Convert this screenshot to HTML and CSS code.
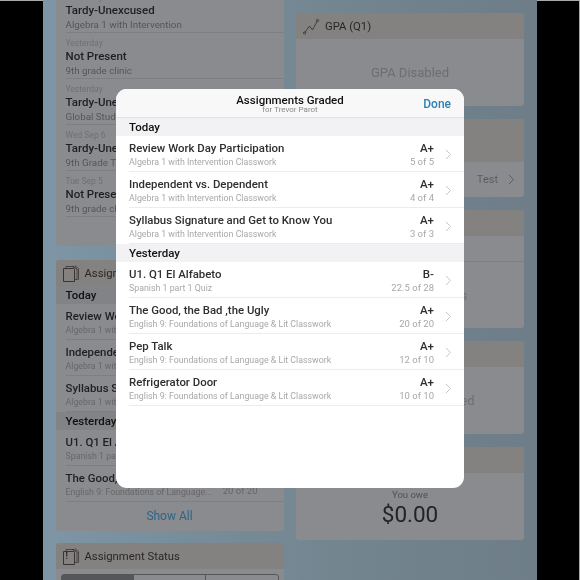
FILE: index.html
```html
<!DOCTYPE html>
<html lang="en">
<head>
    <meta charset="UTF-8">
    <meta name="viewport" content="width=device-width, initial-scale=1.0">
    <title>Assignments Graded</title>
    <link rel="stylesheet" href="styles.css">
</head>
<body>
    <svg class="icon-defs" width="0" height="0">
        <symbol id="doc" viewBox="0 0 17 17">
            <path d="M.5 3.500h10l1 1v12H.5z" fill="none" stroke="currentColor"/>
            <path d="M3 3.500V1.500h8l3 3v10h-2.500M11 1.500l3 3M9 1l3 2.500M12 .5l3.500 3v11h-1" fill="none" stroke="currentColor" stroke-width=".8"/>
        </symbol>
    </svg>

    <div class="screen">
        <div class="columns">
            <div class="column">
                <div class="card attendance">
                    <div class="att-list">
                        <div class="att-row">
                            <div class="att-date">Yesterday</div>
                            <div class="att-title">Tardy-Unexcused</div>
                            <div class="att-sub">Algebra 1 with Intervention</div>
                        </div>
                        <div class="att-row">
                            <div class="att-date">Yesterday</div>
                            <div class="att-title">Not Present</div>
                            <div class="att-sub">9th grade clinic</div>
                        </div>
                        <div class="att-row">
                            <div class="att-date">Yesterday</div>
                            <div class="att-title">Tardy-Unexcused</div>
                            <div class="att-sub">Global Studies</div>
                        </div>
                        <div class="att-row">
                            <div class="att-date">Wed Sep 6</div>
                            <div class="att-title">Tardy-Unexcused</div>
                            <div class="att-sub">9th Grade Team</div>
                        </div>
                        <div class="att-row">
                            <div class="att-date">Tue Sep 5</div>
                            <div class="att-title">Not Present</div>
                            <div class="att-sub">9th grade clinic</div>
                        </div>
                    </div>
                </div>

                <div class="card assignments">
                    <div class="card-header">
                        <svg class="card-icon"><use href="#doc"/></svg>
                        <span>Assignments Graded</span>
                    </div>
                    <div class="section-title">Today</div>
                    <div class="row">
                        <div class="row-main">
                            <div class="row-title">Review Work Day</div>
                            <div class="row-sub">Algebra 1 with Intervention</div>
                        </div>
                    </div>
                    <div class="row">
                        <div class="row-main">
                            <div class="row-title">Independent</div>
                            <div class="row-sub">Algebra 1 with Intervention</div>
                        </div>
                    </div>
                    <div class="row">
                        <div class="row-main">
                            <div class="row-title">Syllabus Signature</div>
                            <div class="row-sub">Algebra 1 with Intervention</div>
                        </div>
                    </div>
                    <div class="section-title">Yesterday</div>
                    <div class="row">
                        <div class="row-main">
                            <div class="row-title">U1. Q1 El Alfabeto</div>
                            <div class="row-sub">Spanish 1 part 1 Quiz</div>
                        </div>
                    </div>
                    <div class="row">
                        <div class="row-main">
                            <div class="row-title">The Good, the Bad</div>
                            <div class="row-sub">English 9: Foundations of Language...</div>
                        </div>
                        <div class="row-score">
                            <div class="points">20 of 20</div>
                        </div>
                    </div>
                    <div class="show-all">Show All</div>
                </div>

                <div class="card status">
                    <div class="card-header">
                        <svg class="card-icon"><use href="#doc"/></svg>
                        <span class="bang">!</span>
                        <span>Assignment Status</span>
                    </div>
                    <div class="segments">
                        <div class="segment active"></div>
                        <div class="segment"></div>
                        <div class="segment"></div>
                    </div>
                </div>
            </div>

            <div class="column right">
                <div class="card gpa">
                    <div class="card-header">
                        <svg class="card-icon" viewBox="0 0 17 17">
                            <path d="M1.500 15l5-7 3 4 5-9.500" fill="none" stroke="currentColor" stroke-width=".9"/>
                            <circle cx="1.500" cy="15" r="1.200" fill="none" stroke="currentColor" stroke-width=".7"/>
                            <circle cx="14.500" cy="2.500" r="1.200" fill="none" stroke="currentColor" stroke-width=".7"/>
                        </svg>
                        <span>GPA (Q1)</span>
                    </div>
                    <div class="card-body disabled">GPA Disabled</div>
                </div>

                <div class="card tests">
                    <div class="card-header"></div>
                    <div class="tint-row"></div>
                    <div class="test-row">
                        <span>Test</span>
                        <svg class="chevron" viewBox="0 0 7 11"><path d="M1 1l4.500 4.500L1 10" fill="none" stroke="currentColor"/></svg>
                    </div>
                </div>

                <div class="card messages">
                    <div class="card-header"></div>
                    <div class="message-row"></div>
                    <div class="card-body disabled messages-body">No Announcements</div>
                </div>

                <div class="card discipline">
                    <div class="card-header"></div>
                    <div class="card-body disabled">Report Cards Disabled</div>
                </div>

                <div class="card balance">
                    <div class="card-header"></div>
                    <div class="balance-body">
                        <div class="owe">You owe</div>
                        <div class="amount">$0.00</div>
                    </div>
                </div>
            </div>
        </div>

        <div class="overlay">
            <div class="modal">
                <div class="modal-header">
                    <div class="modal-titles">
                        <div class="modal-title">Assignments Graded</div>
                        <div class="modal-subtitle">for Trevor Parot</div>
                    </div>
                    <div class="done">Done</div>
                </div>

                <div class="section-title">Today</div>
                <div class="row">
                    <div class="row-main">
                        <div class="row-title">Review Work Day Participation</div>
                        <div class="row-sub">Algebra 1 with Intervention Classwork</div>
                    </div>
                    <div class="row-score">
                        <div class="grade">A+</div>
                        <div class="points">5 of 5</div>
                    </div>
                    <svg class="chevron" viewBox="0 0 7 11"><path d="M1 1l4.500 4.500L1 10" fill="none" stroke="currentColor"/></svg>
                </div>
                <div class="row">
                    <div class="row-main">
                        <div class="row-title">Independent vs. Dependent</div>
                        <div class="row-sub">Algebra 1 with Intervention Classwork</div>
                    </div>
                    <div class="row-score">
                        <div class="grade">A+</div>
                        <div class="points">4 of 4</div>
                    </div>
                    <svg class="chevron" viewBox="0 0 7 11"><path d="M1 1l4.500 4.500L1 10" fill="none" stroke="currentColor"/></svg>
                </div>
                <div class="row">
                    <div class="row-main">
                        <div class="row-title">Syllabus Signature and Get to Know You</div>
                        <div class="row-sub">Algebra 1 with Intervention Classwork</div>
                    </div>
                    <div class="row-score">
                        <div class="grade">A+</div>
                        <div class="points">3 of 3</div>
                    </div>
                    <svg class="chevron" viewBox="0 0 7 11"><path d="M1 1l4.500 4.500L1 10" fill="none" stroke="currentColor"/></svg>
                </div>

                <div class="section-title">Yesterday</div>
                <div class="row">
                    <div class="row-main">
                        <div class="row-title">U1. Q1 El Alfabeto</div>
                        <div class="row-sub">Spanish 1 part 1 Quiz</div>
                    </div>
                    <div class="row-score">
                        <div class="grade">B-</div>
                        <div class="points">22.5 of 28</div>
                    </div>
                    <svg class="chevron" viewBox="0 0 7 11"><path d="M1 1l4.500 4.500L1 10" fill="none" stroke="currentColor"/></svg>
                </div>
                <div class="row">
                    <div class="row-main">
                        <div class="row-title">The Good, the Bad ,the Ugly</div>
                        <div class="row-sub">English 9: Foundations of Language &amp; Lit Classwork</div>
                    </div>
                    <div class="row-score">
                        <div class="grade">A+</div>
                        <div class="points">20 of 20</div>
                    </div>
                    <svg class="chevron" viewBox="0 0 7 11"><path d="M1 1l4.500 4.500L1 10" fill="none" stroke="currentColor"/></svg>
                </div>
                <div class="row">
                    <div class="row-main">
                        <div class="row-title">Pep Talk</div>
                        <div class="row-sub">English 9: Foundations of Language &amp; Lit Classwork</div>
                    </div>
                    <div class="row-score">
                        <div class="grade">A+</div>
                        <div class="points">12 of 10</div>
                    </div>
                    <svg class="chevron" viewBox="0 0 7 11"><path d="M1 1l4.500 4.500L1 10" fill="none" stroke="currentColor"/></svg>
                </div>
                <div class="row">
                    <div class="row-main">
                        <div class="row-title">Refrigerator Door</div>
                        <div class="row-sub">English 9: Foundations of Language &amp; Lit Classwork</div>
                    </div>
                    <div class="row-score">
                        <div class="grade">A+</div>
                        <div class="points">10 of 10</div>
                    </div>
                    <svg class="chevron" viewBox="0 0 7 11"><path d="M1 1l4.500 4.500L1 10" fill="none" stroke="currentColor"/></svg>
                </div>
            </div>
        </div>
    </div>
</body>
</html>
```

FILE: styles.css
```css
html, body {
    height: 580px;
    overflow: hidden;
}
body {
    margin: 0;
    background: #000;
    box-shadow: inset 0 1px #aaa, inset -1px 0 #aaa;
    font-family: Roboto, "Liberation Sans", sans-serif;
    color: #1f1f21;
}
.icon-defs {
    display: block;
    height: 0;
}
.screen {
    position: relative;
    width: 494px;
    height: 580px;
    margin: 0 auto;
    overflow: hidden;
    background: linear-gradient(90deg, #7d95a5 0%, #73858f 60%, #6e7d87 100%);
    filter: blur(0.35px);
}
.columns {
    display: grid;
    grid-template-columns: 228px 228px;
    column-gap: 12.5px;
    padding: 0 12.5px;
}
.column {
    display: flex;
    flex-direction: column;
    gap: 12px;
}
.column.right {
    gap: 13px;
    padding-top: 13px;
}
.card {
    flex: none;
    background: #8a8b8e;
    border-radius: 3px;
    overflow: hidden;
}
.card-header {
    display: flex;
    align-items: center;
    gap: 5px;
    height: 26px;
    padding: 0 7px;
    background: #848280;
    font-size: 11.300px;
    color: #2b2624;
    position: relative;
}
.card-icon {
    width: 17px;
    height: 17px;
    color: #3a3532;
    flex: none;
}
.bang {
    position: absolute;
    left: 10px;
    top: 8px;
    font-size: 9px;
    font-weight: 600;
}

/* attendance card, scrolled past the top */
.attendance {
    height: 246px;
    margin-bottom: 2px;
    border-radius: 0 0 3px 3px;
}
.att-list {
    margin-top: -13px;
}
.att-row {
    height: 46px;
    margin-left: 10px;
    box-sizing: border-box;
    border-bottom: 1px solid #7e7f82;
    padding-top: 5px;
}
.att-date {
    font-size: 8.500px;
    line-height: 11px;
    color: #6f7073;
}
.att-title {
    font-size: 11.500px;
    line-height: 15px;
    font-weight: 500;
    color: #1f1f21;
}
.att-sub {
    font-size: 9.800px;
    line-height: 13px;
    color: #55565a;
}

/* rows shared by the card and the modal */
.section-title {
    height: 18px;
    line-height: 18px;
    padding-left: 13px;
    background: #f2f2f4;
    font-size: 11.500px;
    font-weight: 500;
    color: #111;
}
.assignments .section-title {
    padding-left: 10px;
    background: #828386;
}
.row {
    display: flex;
    align-items: center;
    height: 36px;
    box-sizing: border-box;
    margin-left: 13px;
    padding-top: 1px;
    border-bottom: 1px solid #ececee;
}
.assignments .row {
    margin-left: 10px;
    padding-right: 26px;
    border-bottom-color: #7e7f82;
}
.row-main {
    flex: 1;
    min-width: 0;
}
.row-title {
    font-size: 11.400px;
    line-height: 15px;
    font-weight: 500;
    white-space: nowrap;
    color: #2f2f31;
}
.assignments .row-title {
    color: #1f1f21;
}
.row-sub {
    font-size: 8.800px;
    line-height: 12px;
    white-space: nowrap;
    color: #a8a8ab;
}
.assignments .row-sub,
.assignments .points {
    color: #66676a;
}
.row-score {
    text-align: right;
    flex: none;
}
.grade {
    font-size: 11.500px;
    line-height: 15px;
    font-weight: 500;
    color: #2f2f31;
}
.points {
    font-size: 9.500px;
    line-height: 12px;
    color: #a8a8ab;
}
.assignments .points {
    margin-top: 13px;
}
.row .chevron {
    margin-left: 11px;
    margin-right: 12px;
}
.chevron {
    width: 7px;
    height: 11px;
    flex: none;
    color: #c8c8cc;
}
.show-all {
    text-align: center;
    font-size: 12px;
    line-height: 29px;
    height: 29px;
    color: #2e6487;
}

.card-body {
    display: flex;
    align-items: center;
    justify-content: center;
}
.disabled {
    font-size: 13px;
    color: #6d6e71;
}
.gpa .card-body,
.discipline .card-body {
    height: 67px;
}
.tint-row {
    height: 17px;
    background: #848280;
}
.test-row {
    display: flex;
    align-items: center;
    justify-content: flex-end;
    gap: 10px;
    height: 35px;
    padding-right: 9px;
    font-size: 11px;
    color: #5c5d60;
}
.test-row .chevron {
    color: #5c5d60;
}
.message-row {
    height: 25px;
    border-bottom: 1px solid #7e7f82;
}
.messages-body {
    height: 66px;
}

.balance {
    height: 93px;
}
.balance-body {
    text-align: center;
    padding-top: 16px;
}
.owe {
    font-size: 9.500px;
    line-height: 12px;
    color: #505154;
}
.amount {
    font-size: 22.500px;
    line-height: 26px;
    color: #232325;
}

.segments {
    display: flex;
    height: 20px;
    margin: 5px 5px 0;
    border: 1px solid #55565a;
    border-radius: 3px;
}
.segment {
    flex: 1;
    border-left: 1px solid #55565a;
}
.segment:first-child {
    border-left: 0;
}
.segment.active {
    background: #55565a;
}

/* sheet over the dimmed page */
.overlay {
    position: absolute;
    inset: 0;
    display: flex;
    justify-content: center;
    align-items: flex-start;
    padding-top: 89px;
}
.modal {
    width: 348px;
    height: 399px;
    background: #fff;
    border-radius: 11px;
    overflow: hidden;
}
.modal-header {
    position: relative;
    height: 29px;
    box-sizing: border-box;
    background: #f8f8f8;
    border-bottom: 1px solid #e2e2e4;
    display: flex;
    align-items: center;
    justify-content: center;
}
.modal-titles {
    text-align: center;
}
.modal-title {
    font-size: 11.500px;
    line-height: 14px;
    font-weight: 500;
    color: #111;
}
.modal-subtitle {
    font-size: 8px;
    line-height: 8px;
    margin-top: -1px;
    color: #8a8a8d;
}
.done {
    position: absolute;
    right: 13px;
    top: 8px;
    font-size: 12px;
    line-height: 14px;
    font-weight: 500;
    color: #2f7fb8;
}
```
